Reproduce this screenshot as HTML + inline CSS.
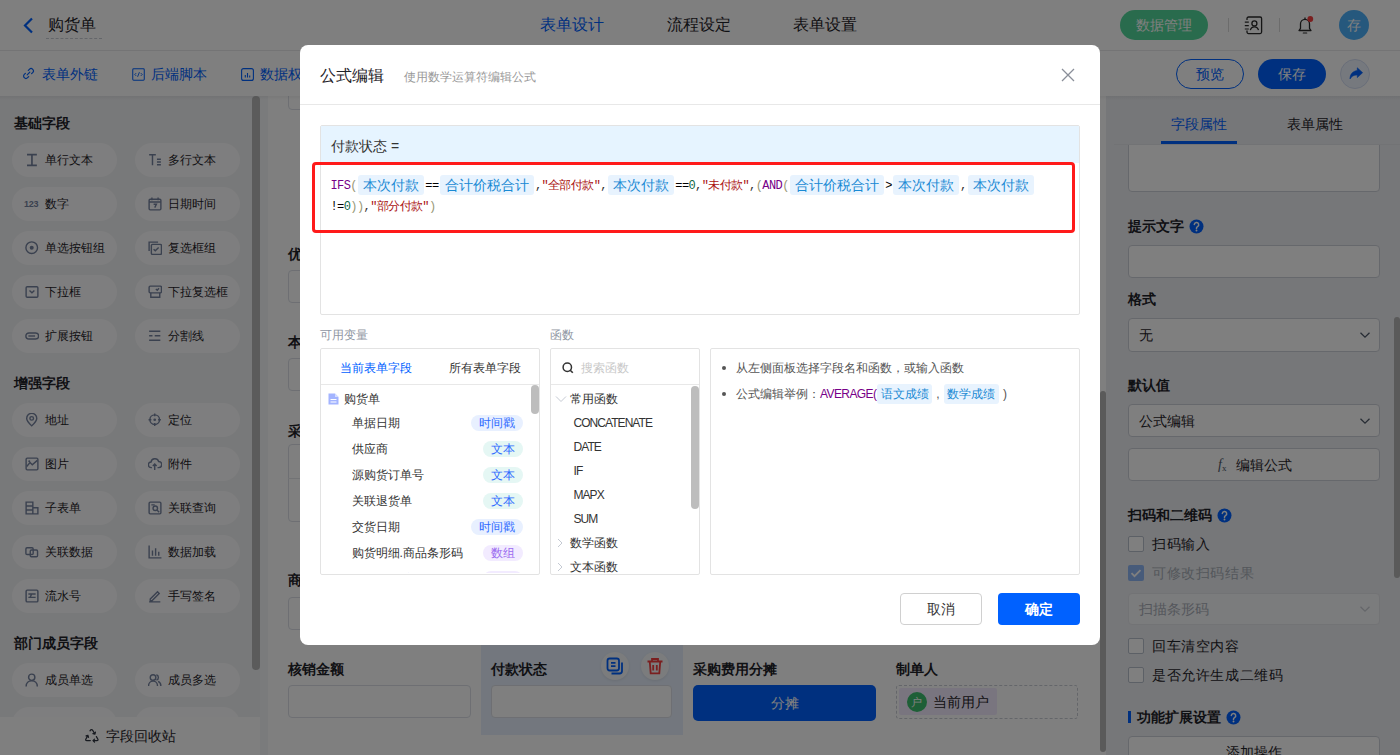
<!DOCTYPE html>
<html><head><meta charset="utf-8">
<style>
*{box-sizing:border-box;margin:0;padding:0}
html,body{width:1400px;height:755px;overflow:hidden}
body{position:relative;font-family:"Liberation Sans",sans-serif;color:#1f2329;background:#fff;font-size:14px}
.a{position:absolute}
.t{position:absolute;white-space:nowrap;line-height:20px}
svg{display:block}
/* left pills */
.pill{position:absolute;width:105px;height:34px;border-radius:17px;background:#fdfdfe}
.pill .ic{position:absolute;left:13px;top:10px;width:14px;height:14px}
.pill span{position:absolute;left:33px;top:7px;font-size:12px;line-height:20px;color:#1f2329;white-space:nowrap}
.sec{position:absolute;left:14px;font-size:14px;font-weight:bold;line-height:20px;color:#1f2329}
.inp{position:absolute;border:1px solid #dcdfe6;border-radius:4px;background:#fff}
.lbl{position:absolute;font-size:14px;font-weight:bold;line-height:20px;white-space:nowrap;color:#1f2329}
.code{white-space:nowrap;font-family:"Liberation Mono",monospace;font-size:12px;letter-spacing:-0.6px;line-height:22px;height:22px;color:#333}
.chip{display:inline-block;font-family:"Liberation Sans",sans-serif;font-size:14px;letter-spacing:0;line-height:20px;height:20px;padding:0 5px;margin:0 1.2px;background:#e8f3fe;color:#1a8ad4;border-radius:3px;vertical-align:top}
.chip2{display:inline-block;font-size:12px;line-height:20px;height:20px;padding:0 3.5px;margin:0 1px;background:#e8f3fe;color:#1a8ad4;border-radius:3px;vertical-align:top}
.tag{height:16px;border-radius:8px;font-size:12px;line-height:16px;text-align:center;white-space:nowrap}
.tag.ts{background:#e8f0ff;color:#2f6bff}
.tag.tx{background:#e5f7f4;color:#2f6bff}
.tag.ar{background:#f2ebff;color:#9b6cf0}
</style></head><body>

<!-- HEADER -->
<div class="a" style="left:0;top:0;width:1400px;height:51px;background:#fff;border-bottom:1px solid #e8e9eb"></div>
<svg class="a" style="left:22px;top:17px" width="13" height="17" viewBox="0 0 13 17"><path d="M10 1.5 L3 8.5 L10 15.5" fill="none" stroke="#0061ff" stroke-width="2.2"/></svg>
<div class="t" style="left:48px;top:15px;font-size:16px">购货单</div>
<div class="a" style="left:46px;top:38px;width:56px;border-top:1px dashed #c9cdd4"></div>
<div class="t" style="left:540px;top:15px;font-size:16px;color:#0061ff">表单设计</div>
<div class="t" style="left:667px;top:15px;font-size:16px">流程设定</div>
<div class="t" style="left:793px;top:15px;font-size:16px">表单设置</div>

<div class="a" style="left:1120px;top:10px;width:88px;height:30px;border-radius:15px;background:#52d79a"></div>
<div class="t" style="left:1136px;top:15px;font-size:14px;color:#fff">数据管理</div>
<div class="a" style="left:1228px;top:18px;width:1px;height:14px;background:#d8d8d8"></div>
<svg class="a" style="left:1244px;top:16px" width="20" height="19" viewBox="0 0 20 19"><path d="M3 4V2.5A1.5 1.5 0 0 1 4.5 1h11.6a1.5 1.5 0 0 1 1.5 1.5v13.6a1.5 1.5 0 0 1-1.5 1.5H4.5A1.5 1.5 0 0 1 3 16.1V14.5" fill="none" stroke="#2a2a2a" stroke-width="1.3"/><circle cx="10.4" cy="7.4" r="2.5" fill="none" stroke="#2a2a2a" stroke-width="1.3"/><path d="M6.3 14.2c.6-2.5 2.2-3.4 4.1-3.4s3.5.9 4.1 3.4" fill="none" stroke="#2a2a2a" stroke-width="1.3"/><path d="M0.8 6.1h4M0.8 9.6h4M0.8 13h4" stroke="#2a2a2a" stroke-width="1.2"/></svg>
<div class="a" style="left:1279px;top:18px;width:1px;height:14px;background:#d8d8d8"></div>
<svg class="a" style="left:1295px;top:15px" width="20" height="20" viewBox="0 0 20 20"><path d="M4 15.5h12l-1.5-2.2V8.8a4.5 4.5 0 0 0-9 0v4.5z" fill="none" stroke="#2a2a2a" stroke-width="1.3" stroke-linejoin="round"/><path d="M8.3 18h3.4" stroke="#2a2a2a" stroke-width="1.2" stroke-linecap="round"/><path d="M10 2.5v1.8" stroke="#2a2a2a" stroke-width="1.3"/><circle cx="15.3" cy="4" r="2.9" fill="#f53f3f"/></svg>
<div class="a" style="left:1339px;top:10px;width:30px;height:30px;border-radius:15px;background:#4cb0fa"></div>
<div class="t" style="left:1347px;top:15px;font-size:14px;color:#fff">存</div>

<!-- BAR2 -->
<div class="a" style="left:0;top:51px;width:1400px;height:45px;background:#fff"></div>
<svg class="a" style="left:22px;top:67px" width="13" height="13" viewBox="0 0 13 13"><path d="M5.2 7.8l2.6-2.6M6.3 3.4l1.1-1.1a2.3 2.3 0 0 1 3.3 3.3L9.6 6.7M6.7 9.6L5.6 10.7a2.3 2.3 0 0 1-3.3-3.3l1.1-1.1" fill="none" stroke="#0061ff" stroke-width="1.2" stroke-linecap="round"/></svg>
<div class="t" style="left:42px;top:64px;font-size:14px;color:#0061ff">表单外链</div>
<svg class="a" style="left:131.5px;top:68px" width="13" height="13" viewBox="0 0 14 14"><rect x="0.8" y="0.8" width="12.4" height="12.4" rx="1" fill="none" stroke="#0061ff" stroke-width="1.1"/><path d="M4.5 5.5L3 7l1.5 1.5M9.5 5.5L11 7 9.5 8.5M8 4.5L6 9.5" fill="none" stroke="#0061ff" stroke-width="1"/></svg>
<div class="t" style="left:151px;top:64px;font-size:14px;color:#0061ff">后端脚本</div>
<svg class="a" style="left:240.5px;top:68px" width="13" height="13" viewBox="0 0 13 13"><rect x="0.6" y="0.6" width="11.8" height="11.8" rx="2" fill="none" stroke="#0061ff" stroke-width="1.1"/><path d="M4.3 9.5V7M6.5 9.5V5M8.7 9.5V7.5" stroke="#0061ff" stroke-width="1.1"/></svg>
<div class="t" style="left:260px;top:64px;font-size:14px;color:#0061ff">数据权限</div>

<div class="a" style="left:1176px;top:59px;width:68px;height:30px;border-radius:15px;border:1px solid #0061ff;background:#fff"></div>
<div class="t" style="left:1196px;top:64px;font-size:14px;color:#0061ff">预览</div>
<div class="a" style="left:1258px;top:59px;width:68px;height:30px;border-radius:15px;background:#0061ff"></div>
<div class="t" style="left:1278px;top:64px;font-size:14px;color:#fff">保存</div>
<div class="a" style="left:1340px;top:59px;width:30px;height:30px;border-radius:15px;border:1px solid #d3ddf2;background:#edf2fd"></div>
<svg class="a" style="left:1347.5px;top:66px" width="16" height="16" viewBox="0 0 16 16"><path d="M9.3 1.8L14.6 6.7 9.3 11.6V8.9C5.6 8.9 3.6 10.3 2 13 2 8.4 4.6 5.1 9.3 4.6z" fill="#0061ff" stroke="#0061ff" stroke-width="0.6" stroke-linejoin="round"/></svg>

<!-- LEFT PANEL -->
<div id="left" class="a" style="left:0;top:96px;width:260px;height:659px;background:#f1f2f5;overflow:hidden">
<div class="sec" style="top:17px">基础字段</div>
<div class="pill" style="left:12px;top:47px"><svg class="ic" viewBox="0 0 12.5 12.5"><path d="M1.8 1.5h8.8M1.8 11h8.8M6.2 1.5v9.5" stroke="#75829f" stroke-width="1.5"/></svg><span>单行文本</span></div>
<div class="pill" style="left:135px;top:47px"><svg class="ic" viewBox="0 0 12.5 12.5"><path d="M1 1.5h6M4 1.5v9.5M8 5.5h3.5M8 8h3.5M8 10.5h3.5" stroke="#75829f" stroke-width="1.3"/></svg><span>多行文本</span></div>
<div class="pill" style="left:12px;top:91px"><div class="ic" style="left:12px;top:10px;width:16px;font-size:9px;font-weight:bold;color:#75829f;line-height:14px;letter-spacing:-0.3px">123</div><span>数字</span></div>
<div class="pill" style="left:135px;top:91px"><svg class="ic" viewBox="0 0 12.5 12.5"><rect x="1" y="2" width="10.5" height="9.5" rx="1" fill="none" stroke="#75829f" stroke-width="1.25"/><path d="M1 4.5h10.5M3.5 0.5v2.5M9 0.5v2.5M5 6.5h2.5L6 9.5" fill="none" stroke="#75829f" stroke-width="1.25"/></svg><span>日期时间</span></div>
<div class="pill" style="left:12px;top:135px"><svg class="ic" viewBox="0 0 12.5 12.5"><circle cx="6" cy="6" r="5.2" fill="none" stroke="#75829f" stroke-width="1.25"/><circle cx="6" cy="6" r="1.8" fill="#75829f"/></svg><span>单选按钮组</span></div>
<div class="pill" style="left:135px;top:135px"><svg class="ic" viewBox="0 0 12.5 12.5"><path d="M1 9V1h8" fill="none" stroke="#75829f" stroke-width="1.25"/><rect x="3" y="3" width="9" height="9" rx="1" fill="none" stroke="#75829f" stroke-width="1.25"/><path d="M5 7.3l1.5 1.5 3-3" fill="none" stroke="#75829f" stroke-width="1.25"/></svg><span>复选框组</span></div>
<div class="pill" style="left:12px;top:179px"><svg class="ic" viewBox="0 0 12.5 12.5"><rect x="1" y="1.5" width="10.5" height="9.5" rx="1" fill="none" stroke="#75829f" stroke-width="1.25"/><path d="M4 5l2.2 2 2.2-2" fill="none" stroke="#75829f" stroke-width="1.25"/></svg><span>下拉框</span></div>
<div class="pill" style="left:135px;top:179px"><svg class="ic" viewBox="0 0 12.5 12.5"><rect x="1" y="1" width="11" height="6" rx="1" fill="none" stroke="#75829f" stroke-width="1.25"/><path d="M2.5 7v4h8V7M7 3.5l1.3 1.2 1.5-1.8" fill="none" stroke="#75829f" stroke-width="1.25"/></svg><span>下拉复选框</span></div>
<div class="pill" style="left:12px;top:223px"><svg class="ic" viewBox="0 0 12.5 12.5"><rect x="0.8" y="3.5" width="11.4" height="5.5" rx="2.75" fill="none" stroke="#75829f" stroke-width="1.3"/><path d="M3 6.25h6" stroke="#75829f" stroke-width="1.25"/></svg><span>扩展按钮</span></div>
<div class="pill" style="left:135px;top:223px"><svg class="ic" viewBox="0 0 12.5 12.5"><path d="M1 2h10M1 6h3M6 6h5M1 10h10" stroke="#75829f" stroke-width="1.25"/></svg><span>分割线</span></div>
<div class="sec" style="top:277px">增强字段</div>
<div class="pill" style="left:12px;top:307px"><svg class="ic" viewBox="0 0 12.5 12.5"><path d="M6 11.5C3 8.5 1.5 6.5 1.5 4.8a4.5 4.5 0 0 1 9 0c0 1.7-1.5 3.7-4.5 6.7z" fill="none" stroke="#75829f" stroke-width="1.25"/><circle cx="6" cy="4.8" r="1.6" fill="none" stroke="#75829f" stroke-width="1.25"/></svg><span>地址</span></div>
<div class="pill" style="left:135px;top:307px"><svg class="ic" viewBox="0 0 12.5 12.5"><circle cx="6" cy="6" r="4.3" fill="none" stroke="#75829f" stroke-width="1.25"/><circle cx="6" cy="6" r="1.2" fill="#75829f"/><path d="M6 0.5v2.5M6 9v2.5M0.5 6h2.5M9 6h2.5" stroke="#75829f" stroke-width="1.25"/></svg><span>定位</span></div>
<div class="pill" style="left:12px;top:351px"><svg class="ic" viewBox="0 0 12.5 12.5"><rect x="1" y="1" width="10.5" height="10.5" rx="1" fill="none" stroke="#75829f" stroke-width="1.25"/><path d="M1.5 8.5l3-3.5 2 2 4.5-4" fill="none" stroke="#75829f" stroke-width="1.25"/><circle cx="3.8" cy="3.8" r="0.9" fill="#75829f"/></svg><span>图片</span></div>
<div class="pill" style="left:135px;top:351px"><svg class="ic" viewBox="0 0 12.5 12.5"><path d="M3.5 9.5H3a2.5 2.5 0 0 1-.3-5A3.5 3.5 0 0 1 9.5 4a2.6 2.6 0 0 1 0 5.5H8.5M6 11.5V6.5M4.3 8L6 6.3 7.7 8" fill="none" stroke="#75829f" stroke-width="1.25"/></svg><span>附件</span></div>
<div class="pill" style="left:12px;top:395px"><svg class="ic" viewBox="0 0 12.5 12.5"><path d="M1 1h6v10.5H1zM1 4.5h6M1 8h6M7 6h4.5v5.5H7" fill="none" stroke="#75829f" stroke-width="1.25"/></svg><span>子表单</span></div>
<div class="pill" style="left:135px;top:395px"><svg class="ic" viewBox="0 0 12.5 12.5"><rect x="1" y="1" width="10.5" height="10.5" rx="1" fill="none" stroke="#75829f" stroke-width="1.25"/><circle cx="6.5" cy="6.5" r="2" fill="none" stroke="#75829f" stroke-width="1.25"/><path d="M8 8l2 2M3 3.5h3" stroke="#75829f" stroke-width="1.25"/></svg><span>关联查询</span></div>
<div class="pill" style="left:12px;top:439px"><svg class="ic" viewBox="0 0 12.5 12.5"><rect x="0.8" y="2.5" width="6.5" height="6" rx="1" fill="none" stroke="#75829f" stroke-width="1.25"/><rect x="4.7" y="4.5" width="6.5" height="6" rx="1" fill="none" stroke="#75829f" stroke-width="1.25"/></svg><span>关联数据</span></div>
<div class="pill" style="left:135px;top:439px"><svg class="ic" viewBox="0 0 12.5 12.5"><path d="M1 0.5v11h11M4 9.5V5M6.8 9.5V3M9.6 9.5V6" fill="none" stroke="#75829f" stroke-width="1.25"/></svg><span>数据加载</span></div>
<div class="pill" style="left:12px;top:483px"><svg class="ic" viewBox="0 0 12.5 12.5"><rect x="1" y="1" width="10.5" height="10.5" rx="1" fill="none" stroke="#75829f" stroke-width="1.3"/><path d="M3 4.5h6.5M3 7.5h6.5M6 4.5l-1.5 3" fill="none" stroke="#75829f" stroke-width="1.25"/></svg><span>流水号</span></div>
<div class="pill" style="left:135px;top:483px"><svg class="ic" viewBox="0 0 12.5 12.5"><path d="M2 9L8.5 2.5l1.5 1.5L3.5 10.5H2zM1 11.5h10" fill="none" stroke="#75829f" stroke-width="1.25"/></svg><span>手写签名</span></div>
<div class="sec" style="top:537px">部门成员字段</div>
<div class="pill" style="left:12px;top:567px"><svg class="ic" viewBox="0 0 12.5 12.5"><circle cx="6" cy="3.8" r="2.8" fill="none" stroke="#75829f" stroke-width="1.3"/><path d="M1 12c0-3 2.2-5 5-5s5 2 5 5" fill="none" stroke="#75829f" stroke-width="1.3"/></svg><span>成员单选</span></div>
<div class="pill" style="left:135px;top:567px"><svg class="ic" viewBox="0 0 12.5 12.5"><circle cx="4.5" cy="4" r="2.5" fill="none" stroke="#75829f" stroke-width="1.25"/><path d="M0.5 11.5c0-2.6 1.8-4.3 4-4.3s4 1.7 4 4.3M7.5 1.6a2.5 2.5 0 0 1 0 4.8M9 7.5c1.5.6 2.5 2 2.5 4" fill="none" stroke="#75829f" stroke-width="1.25"/></svg><span>成员多选</span></div>
<div class="pill" style="left:12px;top:611px"><svg class="ic" viewBox="0 0 12.5 12.5"><circle cx="6" cy="3.8" r="2.8" fill="none" stroke="#75829f" stroke-width="1.3"/><path d="M1 12c0-3 2.2-5 5-5s5 2 5 5" fill="none" stroke="#75829f" stroke-width="1.3"/></svg><span>部门单选</span></div>
<div class="pill" style="left:135px;top:611px"><svg class="ic" viewBox="0 0 12.5 12.5"><circle cx="4.5" cy="4" r="2.5" fill="none" stroke="#75829f" stroke-width="1.25"/><path d="M0.5 11.5c0-2.6 1.8-4.3 4-4.3s4 1.7 4 4.3M7.5 1.6a2.5 2.5 0 0 1 0 4.8M9 7.5c1.5.6 2.5 2 2.5 4" fill="none" stroke="#75829f" stroke-width="1.25"/></svg><span>部门多选</span></div>
<div class="a" style="left:252px;top:0;width:8px;height:574px;border-radius:4px;background:#b6b6b6"></div>
<div class="a" style="left:0;top:621px;width:260px;height:38px;background:#fff"></div>
<svg class="a" style="left:84px;top:632px" width="16" height="15" viewBox="0 0 16 15"><path d="M6 2.8Q7.5 0.4 9 2.8L10.9 6.1M11.4 4.1l-.5 2-2-.4M12.4 8.6l1.5 2.6q.6 1.4-1 1.4H9M10.5 11.1L9 12.6l1.5 1.5M6.3 12.6H2.8q-1.6 0-1-1.4L3.9 7.4M2.1 7.8l1.8-.4.6 1.9" fill="none" stroke="#2f3440" stroke-width="1.25" stroke-linecap="round" stroke-linejoin="round"/></svg>
<div class="t" style="left:105.5px;top:630px;font-size:14px;color:#1f2329">字段回收站</div>
</div>

<!-- CANVAS -->
<div id="canvas" class="a" style="left:260px;top:96px;width:846px;height:659px;background:#fff;overflow:hidden">
<div class="a" style="left:0px;top:0px;width:8px;height:659px;background:#f5f6f8"></div>
<div class="a" style="left:28px;top:-19px;width:183px;height:33px;border:1px solid #dcdfe6;border-radius:4px;background:#fff"></div>
<div class="t" style="left:28px;top:147.5px;font-size:14px;font-weight:bold">优惠金额</div>
<div class="a" style="left:28px;top:174px;width:183px;height:33px;border:1px solid #dcdfe6;border-radius:4px;background:#fff"></div>
<div class="t" style="left:28px;top:236px;font-size:14px;font-weight:bold">本次付款</div>
<div class="a" style="left:28px;top:262px;width:183px;height:33px;border:1px solid #dcdfe6;border-radius:4px;background:#fff"></div>
<div class="t" style="left:28px;top:325px;font-size:14px;font-weight:bold">采购明细</div>
<div class="a" style="left:28px;top:348px;width:412px;height:78px;border:1px solid #dcdfe6;border-radius:4px;background:#fff"></div>
<div class="a" style="left:28px;top:382px;width:412px;height:1px;background:#e5e6eb"></div>
<div class="t" style="left:28px;top:474px;font-size:14px;font-weight:bold">商品合计</div>
<div class="a" style="left:28px;top:501px;width:183px;height:33px;border:1px solid #dcdfe6;border-radius:4px;background:#fff"></div>
<div class="t" style="left:28px;top:563px;font-size:14px;font-weight:bold">核销金额</div>
<div class="a" style="left:28px;top:589px;width:183px;height:33px;border:1px solid #dcdfe6;border-radius:4px;background:#fff"></div>
<div class="a" style="left:221px;top:504px;width:202px;height:135px;background:#e6effc"></div>
<div class="t" style="left:231px;top:563px;font-size:14px;font-weight:bold">付款状态</div>
<div class="a" style="left:231px;top:589px;width:181px;height:33px;border:1px solid #dcdfe6;border-radius:4px;background:#fff"></div>
<div class="a" style="left:341px;top:556px;width:28px;height:28px;border-radius:14px;background:#f7f8fa;box-shadow:0 1px 3px rgba(0,0,0,.08)"></div>
<svg class="a" style="left:346px;top:561px" width="18" height="18" viewBox="0 0 18 18"><rect x="1.5" y="1.5" width="11.5" height="12" rx="2.2" fill="none" stroke="#0061ff" stroke-width="1.8"/><path d="M5 5.8h4.5M5 9.2h4.5" stroke="#0061ff" stroke-width="1.7"/><path d="M16 5.5v8.5a2.5 2.5 0 0 1-2.5 2.5H5.5" fill="none" stroke="#0061ff" stroke-width="1.8"/></svg>
<div class="a" style="left:381px;top:556px;width:28px;height:28px;border-radius:14px;background:#f7f8fa;box-shadow:0 1px 3px rgba(0,0,0,.08)"></div>
<svg class="a" style="left:386px;top:561px" width="18" height="18" viewBox="0 0 18 18"><path d="M1.5 4.5h15M6 4.5V2h6v2.5M3.8 5l.9 11.3h8.6l.9-11.3M7.2 8v5.5M10.8 8v5.5" fill="none" stroke="#f53f3f" stroke-width="1.8"/></svg>
<div class="t" style="left:433px;top:563px;font-size:14px;font-weight:bold">采购费用分摊</div>
<div class="a" style="left:433px;top:589px;width:183px;height:36px;background:#0061ff;border-radius:5px"></div>
<div class="t" style="left:511px;top:597px;font-size:14px;color:#fff">分摊</div>
<div class="t" style="left:636px;top:563px;font-size:14px;font-weight:bold">制单人</div>
<div class="a" style="left:636px;top:589px;width:182px;height:34px;border:1px dashed #c9cdd4;border-radius:3px"></div>
<div class="a" style="left:639px;top:592px;width:98px;height:27px;background:#f3ebff;border-radius:2px"></div>
<div class="a" style="left:647px;top:596px;width:20px;height:20px;border-radius:10px;background:#3dbe6e"></div>
<div class="t" style="left:651px;top:596px;font-size:11px;color:#fff;line-height:20px">户</div>
<div class="t" style="left:673px;top:596px;font-size:14px">当前用户</div>
<div class="a" style="left:840px;top:295px;width:6px;height:361px;background:#b4b4b4;border-radius:3px"></div>
</div><!--ce-->

<!-- RIGHT PANEL -->
<div id="right" class="a" style="left:1106px;top:96px;width:294px;height:659px;background:#eceef2;overflow:hidden">
<div class="a" style="left:8px;top:48px;width:286px;height:1px;background:#e5e6eb"></div>
<div class="t" style="left:65px;top:18px;font-size:14px;color:#0061ff">字段属性</div>
<div class="a" style="left:55px;top:45px;width:76px;height:3px;background:#0061ff"></div>
<div class="t" style="left:181px;top:18px;font-size:14px">表单属性</div>
<div class="a" style="left:0;top:49px;width:294px;height:610px;overflow:hidden">
<div class="a" style="left:22px;top:-25px;width:252px;height:72px;border:1px solid #cdd1d9;border-radius:4px;background:#fff"></div>
<div class="t" style="left:22px;top:71px;font-size:14px;font-weight:bold">提示文字</div>
<div class="a" style="left:22px;top:100px;width:252px;height:33px;border:1px solid #cdd1d9;border-radius:4px;background:#fff"></div>
<div class="t" style="left:22px;top:144px;font-size:14px;font-weight:bold">格式</div>
<div class="a" style="left:22px;top:173px;width:252px;height:34px;border:1px solid #cdd1d9;border-radius:4px;background:#fff"></div>
<div class="t" style="left:33px;top:180px;font-size:14px">无</div>
<div class="t" style="left:22px;top:230px;font-size:14px;font-weight:bold">默认值</div>
<div class="a" style="left:22px;top:259px;width:252px;height:33px;border:1px solid #cdd1d9;border-radius:4px;background:#fff"></div>
<div class="t" style="left:33px;top:266px;font-size:14px">公式编辑</div>
<div class="a" style="left:22px;top:303px;width:252px;height:33px;border:1px solid #cdd1d9;border-radius:4px;background:#fff"></div>
<div class="t" style="left:130px;top:310px;font-size:14px">编辑公式</div>
<div class="t" style="left:112px;top:310px;font-size:14px;font-family:'Liberation Serif',serif;color:#4e5969"><i>f</i><span style="font-size:9px;position:relative;top:2px">x</span></div>
<div class="t" style="left:22px;top:360px;font-size:14px;font-weight:bold">扫码和二维码</div>
<div class="t" style="left:46px;top:389px;font-size:14px;letter-spacing:0.6px">扫码输入</div>
<div class="t" style="left:46px;top:418px;font-size:14px;letter-spacing:0.6px;color:#a9aeb8">可修改扫码结果</div>
<div class="a" style="left:22px;top:448px;width:252px;height:32px;border:1px solid #e5e6eb;border-radius:4px;background:#f7f8fa"></div>
<div class="t" style="left:33px;top:454px;font-size:14px;color:#a9aeb8">扫描条形码</div>
<div class="t" style="left:46px;top:491px;font-size:14px;letter-spacing:0.6px">回车清空内容</div>
<div class="t" style="left:46px;top:520px;font-size:14px;letter-spacing:0.6px">是否允许生成二维码</div>
<div class="a" style="left:22px;top:566px;width:3px;height:12px;background:#0061ff"></div>
<div class="t" style="left:31px;top:562px;font-size:14px;font-weight:bold">功能扩展设置</div>
<div class="a" style="left:22px;top:591px;width:252px;height:33px;border:1px solid #cdd1d9;border-radius:4px;background:#fff"></div>
<div class="t" style="left:120px;top:597px;font-size:14px">添加操作</div>
</div>
<svg class="a" style="left:82.5px;top:122.5px" width="15" height="15" viewBox="0 0 15 15"><circle cx="7.5" cy="7.5" r="7" fill="#0061ff"/><path d="M5.3 5.6a2.2 2.2 0 1 1 3.2 2c-.7.4-1 .8-1 1.5v.4" fill="none" stroke="#fff" stroke-width="1.5" stroke-linecap="round"/><circle cx="7.5" cy="11.5" r="0.95" fill="#fff"/></svg>
<svg class="a" style="left:110.5px;top:411.5px" width="15" height="15" viewBox="0 0 15 15"><circle cx="7.5" cy="7.5" r="7" fill="#0061ff"/><path d="M5.3 5.6a2.2 2.2 0 1 1 3.2 2c-.7.4-1 .8-1 1.5v.4" fill="none" stroke="#fff" stroke-width="1.5" stroke-linecap="round"/><circle cx="7.5" cy="11.5" r="0.95" fill="#fff"/></svg>
<svg class="a" style="left:119.5px;top:613.5px" width="15" height="15" viewBox="0 0 15 15"><circle cx="7.5" cy="7.5" r="7" fill="#0061ff"/><path d="M5.3 5.6a2.2 2.2 0 1 1 3.2 2c-.7.4-1 .8-1 1.5v.4" fill="none" stroke="#fff" stroke-width="1.5" stroke-linecap="round"/><circle cx="7.5" cy="11.5" r="0.95" fill="#fff"/></svg>
<svg class="a" style="left:252.5px;top:235px" width="12" height="8" viewBox="0 0 12 8"><path d="M1.5 1.8L6 6.2l4.5-4.4" fill="none" stroke="#4e5969" stroke-width="1.3"/></svg>
<svg class="a" style="left:252.5px;top:321px" width="12" height="8" viewBox="0 0 12 8"><path d="M1.5 1.8L6 6.2l4.5-4.4" fill="none" stroke="#4e5969" stroke-width="1.3"/></svg>
<svg class="a" style="left:252.5px;top:509px" width="12" height="8" viewBox="0 0 12 8"><path d="M1.5 1.8L6 6.2l4.5-4.4" fill="none" stroke="#c9cdd4" stroke-width="1.3"/></svg>
<div class="a" style="left:22px;top:440px;width:16px;height:16px;border-radius:2px;border:1px solid #b9c0cc;background:#fff"></div>
<div class="a" style="left:22px;top:469px;width:16px;height:16px;border-radius:2px;background:#8fb6f5"></div>
<svg class="a" style="left:22px;top:469px" width="16" height="16" viewBox="0 0 16 16"><path d="M3.5 8.2l3 3 6-6" fill="none" stroke="#fff" stroke-width="1.8"/></svg>
<div class="a" style="left:22px;top:542px;width:16px;height:16px;border-radius:2px;border:1px solid #b9c0cc;background:#fff"></div>
<div class="a" style="left:22px;top:571px;width:16px;height:16px;border-radius:2px;border:1px solid #b9c0cc;background:#fff"></div>
<div class="a" style="left:288px;top:221px;width:6px;height:261px;background:#b4b4b4;border-radius:3px"></div>
</div><!--re-->

<div class="a" style="left:0;top:96px;width:1400px;height:4px;background:linear-gradient(rgba(0,0,0,0.05),rgba(0,0,0,0))"></div>
<!-- OVERLAY -->
<div class="a" style="left:0;top:0;width:1400px;height:755px;background:rgba(0,0,0,0.5)"></div>

<!-- MODAL -->
<div id="modal" class="a" style="left:300px;top:45px;width:800px;height:600px;background:#fff;border-radius:8px;overflow:hidden">
<div class="t" style="left:20px;top:20.5px;font-size:16px;color:#1f2329">公式编辑</div>
<div class="t" style="left:104px;top:21.5px;font-size:12px;color:#999">使用数学运算符编辑公式</div>
<div class="a" style="left:0px;top:59px;width:800px;height:1px;background:#e8e8e8"></div>
<svg class="a" style="left:761px;top:23px" width="14" height="14" viewBox="0 0 14 14"><path d="M1 1l12 12M13 1L1 13" stroke="#8a8f99" stroke-width="1.3"/></svg>
<div class="a" style="left:20px;top:80px;width:760px;height:190px;border:1px solid #e3e3e3;border-radius:2px;background:#fff"></div>
<div class="a" style="left:21px;top:81px;width:758px;height:37px;background:#e6f4ff"></div>
<div class="t" style="left:31px;top:91px;font-size:14px;color:#333">付款状态 =</div>
<div class="a" style="left:12px;top:117px;width:763px;height:71px;border:3px solid #ff1a1a;border-radius:4px"></div>
<div class="a code" style="left:30.5px;top:130px"><span style="color:#708">IFS</span><span style="color:#997">(</span><span class="chip">本次付款</span><span style="color:#000">==</span><span class="chip">合计价税合计</span>,<span style="color:#a11">"全部付款"</span>,<span class="chip">本次付款</span><span style="color:#000">==</span><span style="color:#164">0</span>,<span style="color:#a11">"未付款"</span>,<span style="color:#997">(</span><span style="color:#708">AND</span><span style="color:#997">(</span><span class="chip">合计价税合计</span><span style="color:#000">&gt;</span><span class="chip">本次付款</span>,<span class="chip">本次付款</span></div>
<div class="a code" style="left:30.5px;top:151px"><span style="color:#000">!=</span><span style="color:#164">0</span><span style="color:#997">))</span>,<span style="color:#a11">"部分付款"</span><span style="color:#997">)</span></div>
<div class="t" style="left:20px;top:280px;font-size:12px;color:#8f96a3">可用变量</div>
<div class="t" style="left:250px;top:280px;font-size:12px;color:#8f96a3">函数</div>
<div class="a" style="left:20px;top:303px;width:220px;height:227px;border:1px solid #e3e3e3;border-radius:2px"></div>
<div class="a" style="left:21px;top:339px;width:218px;height:1px;background:#e8e8e8"></div>
<div class="t" style="left:40px;top:312.5px;font-size:12px;color:#0061ff">当前表单字段</div>
<div class="t" style="left:148.5px;top:312.5px;font-size:12px;color:#333">所有表单字段</div>
<svg class="a" style="left:27.5px;top:347.5px" width="11" height="12" viewBox="0 0 11 12"><path d="M0.5 0.5h6.5l3.5 3.5v7.5H0.5z" fill="#a3b4ff"/><path d="M7 0.5V4h3.5" fill="#d5ddff"/><path d="M2.5 6.5h6M2.5 9h6" stroke="#fff" stroke-width="1"/></svg>
<div class="t" style="left:44px;top:343.5px;font-size:12px;color:#333">购货单</div>
<div class="a" style="left:21px;top:340px;width:218px;height:188px;overflow:hidden">
<div class="t" style="left:30.5px;top:28px;font-size:12px;color:#333">单据日期</div>
<div class="a tag ts" style="left:150px;top:30px;width:52px">时间戳</div>
<div class="t" style="left:30.5px;top:54px;font-size:12px;color:#333">供应商</div>
<div class="a tag tx" style="left:162px;top:56px;width:40px">文本</div>
<div class="t" style="left:30.5px;top:80px;font-size:12px;color:#333">源购货订单号</div>
<div class="a tag tx" style="left:162px;top:82px;width:40px">文本</div>
<div class="t" style="left:30.5px;top:106px;font-size:12px;color:#333">关联退货单</div>
<div class="a tag tx" style="left:162px;top:108px;width:40px">文本</div>
<div class="t" style="left:30.5px;top:132px;font-size:12px;color:#333">交货日期</div>
<div class="a tag ts" style="left:150px;top:134px;width:52px">时间戳</div>
<div class="t" style="left:30.5px;top:158px;font-size:12px;color:#333">购货明细.商品条形码</div>
<div class="a tag ar" style="left:162px;top:160px;width:40px">数组</div>
<div class="t" style="left:30.5px;top:184px;font-size:12px;color:#333">购货明细.商品名称</div>
<div class="a tag ar" style="left:162px;top:186px;width:40px">数组</div>
</div>
<div class="a" style="left:231px;top:340px;width:8px;height:28.5px;background:#bdbdbd;border-radius:4px"></div>
<div class="a" style="left:250px;top:303px;width:150px;height:227px;border:1px solid #e3e3e3;border-radius:2px"></div>
<div class="a" style="left:251px;top:339px;width:148px;height:1px;background:#e8e8e8"></div>
<svg class="a" style="left:261.5px;top:317px" width="12" height="12" viewBox="0 0 12 12"><circle cx="5.3" cy="5.3" r="4.2" fill="none" stroke="#333" stroke-width="1.5"/><path d="M8.2 8.2l2.6 2.6" stroke="#333" stroke-width="1.6"/></svg>
<div class="t" style="left:281px;top:312.5px;font-size:12px;color:#c8c8c8">搜索函数</div>
<svg class="a" style="left:254.5px;top:350px" width="12" height="8" viewBox="0 0 12 8"><path d="M1 1.5l5 5 5-5" fill="none" stroke="#c5cad3" stroke-width="1"/></svg>
<div class="t" style="left:269.5px;top:344px;font-size:12px;color:#333">常用函数</div>
<div class="t" style="left:273.5px;top:368px;font-size:12px;color:#333;letter-spacing:-0.95px">CONCATENATE</div>
<div class="t" style="left:273.5px;top:392px;font-size:12px;color:#333;letter-spacing:-0.95px">DATE</div>
<div class="t" style="left:273.5px;top:416px;font-size:12px;color:#333;letter-spacing:-0.95px">IF</div>
<div class="t" style="left:273.5px;top:440px;font-size:12px;color:#333;letter-spacing:-0.95px">MAPX</div>
<div class="t" style="left:273.5px;top:464px;font-size:12px;color:#333;letter-spacing:-0.95px">SUM</div>
<svg class="a" style="left:257px;top:493px" width="6" height="10" viewBox="0 0 6 10"><path d="M1 1l4 4-4 4" fill="none" stroke="#c5cad3" stroke-width="1"/></svg>
<div class="t" style="left:269.5px;top:488px;font-size:12px;color:#333">数学函数</div>
<svg class="a" style="left:257px;top:517px" width="6" height="10" viewBox="0 0 6 10"><path d="M1 1l4 4-4 4" fill="none" stroke="#c5cad3" stroke-width="1"/></svg>
<div class="t" style="left:269.5px;top:512px;font-size:12px;color:#333">文本函数</div>
<div class="a" style="left:391px;top:341px;width:8px;height:122.5px;background:#bdbdbd;border-radius:4px"></div>
<div class="a" style="left:410px;top:303px;width:370px;height:227px;border:1px solid #e3e3e3;border-radius:2px"></div>
<div class="a" style="left:421.5px;top:321px;width:4px;height:4px;border-radius:2px;background:#555"></div>
<div class="a" style="left:421.5px;top:346.5px;width:4px;height:4px;border-radius:2px;background:#555"></div>
<div class="t" style="left:436px;top:313px;font-size:12px;color:#555">从左侧面板选择字段名和函数，或输入函数</div>
<div class="t" style="left:436px;top:338.5px;font-size:12px;color:#555">公式编辑举例：<span style="color:#708;letter-spacing:-0.6px">AVERAGE(</span><span class="chip2">语文成绩</span><span style="margin:0 3px">,</span><span class="chip2">数学成绩</span> )</div>
<div class="a" style="left:600px;top:548px;width:82px;height:32px;border:1px solid #d0d0d0;border-radius:4px;background:#fff"></div>
<div class="t" style="left:627px;top:554px;font-size:14px;color:#333">取消</div>
<div class="a" style="left:698px;top:548px;width:82px;height:32px;background:#0061ff;border-radius:4px"></div>
<div class="t" style="left:725px;top:554px;font-size:14px;color:#fff;font-weight:bold">确定</div>
</div><!--me-->

</body></html>
